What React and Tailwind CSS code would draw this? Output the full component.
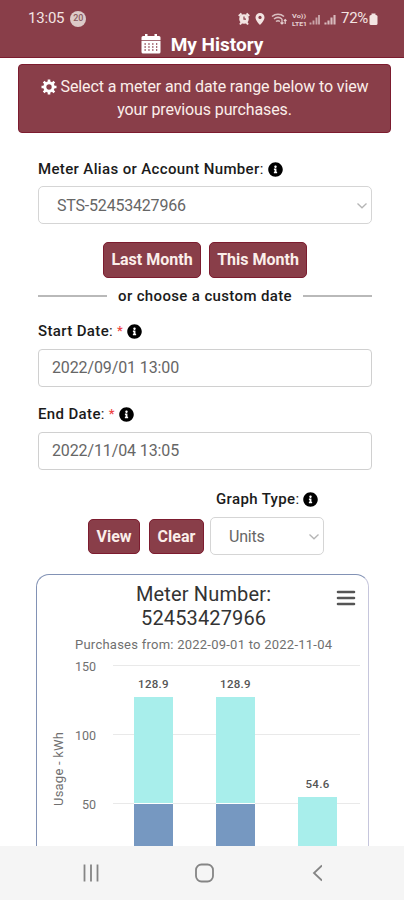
import { FaInfoCircle } from 'react-icons/fa';

const bars = [
  { x: 97, label: '128.9', top: 122, split: 229 },
  { x: 179, label: '128.9', top: 122, split: 229 },
  { x: 261, label: '54.6', top: 222, split: null },
];

const gridLines = [
  { value: 150, y: 91 },
  { value: 100, y: 160 },
  { value: 50, y: 229 },
];

function StatusBar() {
  return (
    <div className="flex h-[30px] items-end justify-between pr-[26px] pl-[28px] text-[#f3e4e2]">
      <div className="flex h-[23px] items-center gap-[6px]">
        <span className="text-[15px] tracking-[-0.2px]">13:05</span>
        <span className="flex size-[16px] items-center justify-center rounded-full bg-[#dccac8] text-[9px] font-medium text-[#8a5a60]">20</span>
      </div>
      <div className="flex h-[23px] items-center">
        <svg width="103" height="16" viewBox="0 0 103 16" fill="none">
          {/* alarm */}
          <circle cx="6" cy="8" r="4.8" fill="#f3e4e2" />
          <path d="M.8 5 3.500 2.500M11.200 5 8.500 2.500M2 13.500 3.500 11.500M10 13.500 8.500 11.500" stroke="#f3e4e2" strokeWidth="2" />
          <path d="M6 5.500V8.200H8" stroke="#893e49" strokeWidth="1.200" />
          {/* location */}
          <path d="M22 2a4.500 4.500 0 0 0-4.500 4.500C17.500 9.500 22 14 22 14s4.500-4.500 4.500-7.500A4.500 4.500 0 0 0 22 2Z" fill="#f3e4e2" />
          <circle cx="22" cy="6.400" r="1.600" fill="#893e49" />
          {/* wifi */}
          <path d="M34 5.500C37.500 2.500 42.500 2.500 46 5.500M36 8C38.500 6 41.500 6 44 8M38 10.500C39.500 9.300 40.500 9.300 42 10.500" stroke="#d9bfc0" strokeWidth="1.600" />
          <path d="M44 8v5m-1.500-1.500L44 13l1.500-1.500M47.200 13V8.500m-1.300 1.300 1.300-1.300 1.300 1.300" stroke="#e6d2d2" strokeWidth="1.200" />
          <text x="54" y="7" fontSize="6" fontWeight="700" fill="#e6d2d2" textLength="14" lengthAdjust="spacingAndGlyphs">Vo))</text>
          <text x="54" y="14.500" fontSize="6" fontWeight="700" fill="#e6d2d2" textLength="15" lengthAdjust="spacingAndGlyphs">LTE1</text>
          {/* signal */}
          <path d="M72.500 13.500v-2M75.500 13.500v-4M78.500 13.500v-7M81 13.500v-9.500" stroke="#c9a3a8" strokeWidth="1.900" />
          <path d="M87.500 13.500v-2M90.500 13.500v-4M93.500 13.500v-7M96.500 13.500v-9.500" stroke="#d8bbbd" strokeWidth="2.100" />
        </svg>
        <span className="text-[15px] tracking-[-0.3px]">72%</span>
        <svg width="9" height="13" viewBox="0 0 9 13" className="mt-[2px] ml-[1px]" fill="#f3e4e2">
          <rect x="2.500" y="0.500" width="4" height="2" />
          <rect x="0.500" y="2" width="8" height="10" rx="1.500" />
        </svg>
      </div>
    </div>
  );
}

function CalendarIcon() {
  return (
    <svg width="20" height="21" viewBox="0 0 20 21">
      <path d="M2 3h2V1h2.500v2h7V1H16v2h2a1.500 1.500 0 0 1 1.500 1.500V7H.5V4.500A1.500 1.500 0 0 1 2 3Z" fill="#fff" />
      <path d="M.5 7.700h19v11.300a1.500 1.500 0 0 1-1.500 1.500H2A1.500 1.500 0 0 1 .5 19Z" fill="#fff" />
      <path d="M3.500 11h13M3.500 14h13M3.500 17h13" stroke="#893e49" strokeWidth="1.300" strokeDasharray="1.300 2.530" />
    </svg>
  );
}

function CogIcon() {
  return (
    <svg width="16" height="16" viewBox="0 0 16 16" fill="none" stroke="#fff">
      <circle cx="8" cy="8" r="4.200" strokeWidth="3" />
      <path d="M8 .5v3M8 12.500v3M.5 8h3M12.500 8h3M2.700 2.700l2.100 2.100M11.200 11.200l2.100 2.100M2.700 13.300l2.100-2.100M11.200 4.800l2.100-2.100" strokeWidth="2.600" />
    </svg>
  );
}

function Button({ children, className }) {
  return (
    <button className={`rounded-[5px] border border-[#7c1c2f] bg-[#893e49] text-center text-[16px] font-bold text-[#fbeeea] ${className}`}>
      {children}
    </button>
  );
}

function Label({ children, required }) {
  return (
    <div className="flex items-center text-[15px] leading-[20px] font-medium tracking-[0.36px] text-[#1b1b1b]">
      <span>{children}<span className="font-normal">:</span></span>
      {required && <span className="ml-[4px] text-[13px] text-[#ee4444]">*</span>}
      <FaInfoCircle className="ml-[4px] size-[15px] text-black" />
    </div>
  );
}

function Chevron() {
  return (
    <svg width="12" height="8" viewBox="0 0 12 8" fill="none" stroke="#b5b5b5" strokeWidth="1.300" className="mr-[-1px]">
      <path d="M1.500 1.500 6 5.800 10.500 1.500" />
    </svg>
  );
}

function Chart() {
  return (
    <div className="mx-auto mt-[19px] h-[273px] w-[333px] overflow-hidden rounded-t-[13px] border border-b-0 border-t-[#8292b5] border-r-[#c6c6dc] border-l-[#8292b5]">
      <svg width="331" height="272" viewBox="0 0 331 272">
        <g fill="#333" fontSize="20">
          <text x="99" y="26" textLength="135">Meter Number:</text>
          <text x="104" y="50" textLength="125">52453427966</text>
        </g>
        <text x="38" y="74" fontSize="13" fill="#707070" textLength="257">Purchases from: 2022-09-01 to 2022-11-04</text>
        <path d="M301 17h16M301 23h16M301 29h16" stroke="#555" strokeWidth="2.600" strokeLinecap="round" />
        {gridLines.map((line) => (
          <g key={line.value}>
            <path d={`M76 ${line.y - 0.5}H323`} stroke="#e9e9e9" />
            <text x="59" y={line.y + 5} textAnchor="end" fontSize="12.500" fill="#707070">{line.value}</text>
          </g>
        ))}
        <text transform="translate(26 231) rotate(-90)" fontSize="13" fill="#707070" textLength="74">Usage - kWh</text>
        {bars.map((bar) => (
          <g key={bar.x}>
            <rect x={bar.x} y={bar.top} width="39" height={272 - bar.top} fill="#a8eeeb" />
            {bar.split && <rect x={bar.x} y={bar.split} width="39" height="43" fill="#7698c1" />}
            {bar.split && <path d={`M${bar.x} ${bar.split - 0.5}h39`} stroke="#fff" />}
            <text x={bar.x + 19.5} y={bar.top - 9} textAnchor="middle" fontSize="11.500" fontWeight="500" letterSpacing="0.3" fill="#555">{bar.label}</text>
          </g>
        ))}
      </svg>
    </div>
  );
}

function NavBar() {
  return (
    <div className="flex h-[54px] items-center justify-center bg-[#f5f5f5]">
      <svg width="240" height="22" viewBox="0 0 240 22" fill="none" stroke="#858585" strokeWidth="1.800">
        <path d="M2.500 2.500v17M9 2.500v17M15.500 2.500v17" />
        <rect x="114" y="2.500" width="17" height="17" rx="5.500" />
        <path d="M240 3.500 232 11l8 7.500" />
      </svg>
    </div>
  );
}

export default function App() {
  return (
    <div className="h-[900px] w-[404px] overflow-hidden bg-white font-['Roboto',sans-serif]">
      <header className="h-[58px] border-b border-[#7c1c2f] bg-[#893e49]">
        <StatusBar />
        <div className="flex h-[27px] items-center justify-center gap-[10px]">
          <CalendarIcon />
          <h1 className="mt-[3px] text-[19px] font-bold text-white">My History</h1>
        </div>
      </header>

      <main className="h-[788px] overflow-hidden">
        <div className="mt-[6px] ml-[18px] h-[69px] w-[373px] rounded-[4px] border border-[#7c1c2f] bg-[#893e49] pt-[10px] text-center text-[16px] leading-[23px] tracking-[-0.12px] text-[#fbeeea]">
          <div className="flex items-center justify-center gap-[4px]">
            <CogIcon />
            Select a meter and date range below to view
          </div>
          your previous purchases.
        </div>

        <form className="mx-[38px] w-[334px] pt-[26px]">
          <Label>Meter Alias or Account Number</Label>
          <div className="mt-[7px] flex h-[38px] items-center justify-between rounded-[5px] border border-[#d5d5d5] pt-[1px] pr-[4px] pl-[18px] text-[16px] tracking-[-0.2px] text-[#666]">
            STS-52453427966
            <Chevron />
          </div>

          <div className="mt-[18px] flex justify-center gap-[8px]">
            <Button className="h-[36px] w-[98px]">Last Month</Button>
            <Button className="h-[36px] w-[98px]">This Month</Button>
          </div>

          <div className="mt-[8px] flex h-[20px] items-center justify-between text-[15px] font-medium tracking-[0.36px] text-[#1b1b1b]">
            <div className="h-[2px] w-[69px] bg-[#b9b9b9]" />
            or choose a custom date
            <div className="h-[2px] w-[69px] bg-[#b9b9b9]" />
          </div>

          <div className="mt-[15px]">
            <Label required>Start Date</Label>
            <div className="mt-[8px] flex h-[38px] items-center rounded-[4px] border border-[#d0d0d0] pl-[13px] text-[16px] tracking-[-0.12px] text-[#666]">2022/09/01 13:00</div>
          </div>
          <div className="mt-[17px]">
            <Label required>End Date</Label>
            <div className="mt-[8px] flex h-[38px] items-center rounded-[4px] border border-[#d0d0d0] pl-[13px] text-[16px] tracking-[-0.12px] text-[#666]">2022/11/04 13:05</div>
          </div>

          <div className="mt-[19px] flex items-end pl-[50px]">
            <Button className="mb-[1px] h-[35px] w-[52px]">View</Button>
            <Button className="mb-[1px] ml-[9px] h-[35px] w-[55px]">Clear</Button>
            <div className="ml-[6px] w-[114px]">
              <div className="pl-[6px]"><Label>Graph Type</Label></div>
              <div className="mt-[8px] flex h-[38px] items-center justify-between rounded-[5px] border border-[#d5d5d5] pt-[1px] pr-[4px] pl-[18px] text-[16px] tracking-[-0.2px] text-[#666]">
                Units
                <Chevron />
              </div>
            </div>
          </div>
        </form>

        <Chart />
      </main>

      <NavBar />
    </div>
  );
}
